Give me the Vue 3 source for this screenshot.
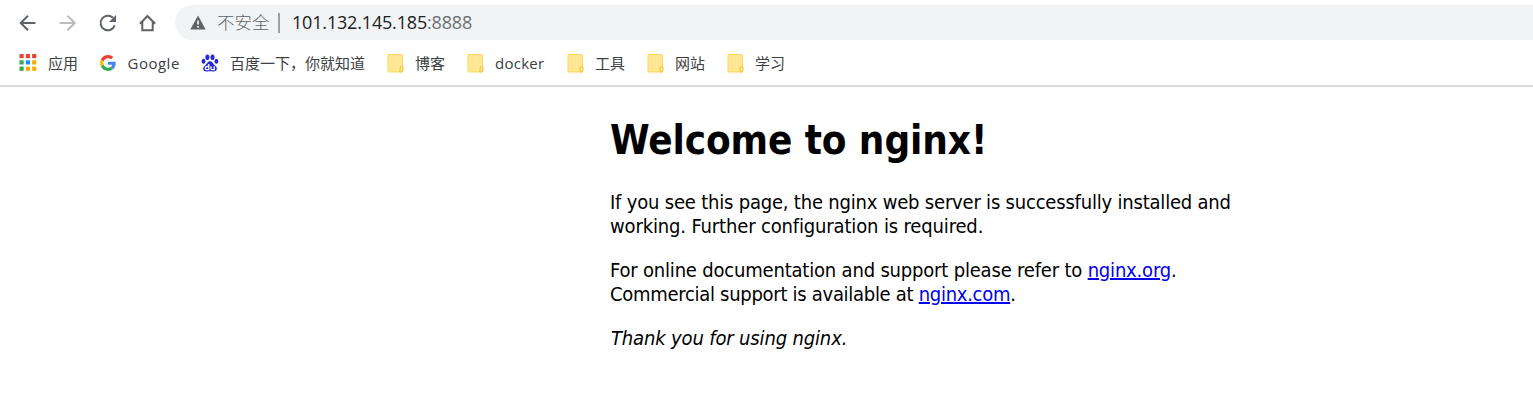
<script setup>
const folders = [
  { name: '博客', cls: 'f1' },
  { name: 'docker', cls: 'docker latin' },
  { name: '工具', cls: 'f3' },
  { name: '网站', cls: 'f4' },
  { name: '学习', cls: 'f5' },
]
const dots = ['#ea4335', '#ea4335', '#ea4335', '#34a853', '#1a8cff', '#fbab05', '#34a853', '#fbab05', '#fbab05']
</script>

<template>
  <div class="browser">
    <div class="toolbar">
      <div class="nav">
        <svg width="20" height="20" viewBox="0 0 20 20" class="ico"><path d="M17.500 10H3M10 2.700 2.700 10l7.300 7.300" /></svg>
        <svg width="20" height="20" viewBox="0 0 20 20" class="ico dim"><path d="M1.500 10h15M9.500 2.700 16.800 10 9.500 17.300" /></svg>
        <svg width="20" height="20" viewBox="0 0 20 20" class="ico"><path d="M16.800 12.300A7.300 7.300 0 1 1 15 4.800" /><path class="solid" d="M18 2v7h-7z" /></svg>
        <svg width="20" height="20" viewBox="0 0 20 20" class="ico"><path d="M1.900 10.800 9.500 3l7.600 7.800M4.300 9v8.200h10.400V9" /></svg>
      </div>
      <div class="omnibox">
        <svg width="16" height="15" viewBox="0 0 16 15"><path fill="#5f6368" d="M8 .5 15.700 14.500H.3z" /><path fill="#f1f3f4" d="M7.200 5.500h1.700v4H7.200zM7.200 11h1.700v1.700H7.200z" /></svg>
        <span class="unsafe">不安全</span>
        <span class="sep"></span>
        <span class="url">101.132.145.185<span class="port">:8888</span></span>
      </div>
    </div>
    <div class="bookmarks">
      <div class="bm apps">
        <svg width="17" height="17" viewBox="0 0 17 17"><rect v-for="(c, i) in dots" :key="i" :x="(i % 3) * 6.3" :y="Math.floor(i / 3) * 6.3" width="4.200" height="4.200" :fill="c" /></svg>
        <span>应用</span>
      </div>
      <div class="bm google latin">
        <svg width="16" height="16" viewBox="0 0 48 48">
          <path fill="#EA4335" d="M24 9.500c3.540 0 6.710 1.220 9.210 3.600l6.850-6.850C35.900 2.380 30.470 0 24 0 14.620 0 6.510 5.380 2.560 13.220l7.980 6.190C12.430 13.720 17.740 9.500 24 9.500z" />
          <path fill="#4285F4" d="M46.980 24.550c0-1.570-.15-3.090-.38-4.550H24v9.020h12.940c-.58 2.960-2.260 5.480-4.780 7.180l7.730 6c4.510-4.180 7.090-10.360 7.090-17.650z" />
          <path fill="#FBBC05" d="M10.530 28.590c-.48-1.450-.76-2.990-.76-4.590s.27-3.140.76-4.590l-7.980-6.190C.92 16.460 0 20.120 0 24c0 3.880.92 7.540 2.560 10.780l7.970-6.190z" />
          <path fill="#34A853" d="M24 48c6.480 0 11.930-2.130 15.890-5.810l-7.730-6c-2.150 1.450-4.920 2.300-8.160 2.300-6.260 0-11.570-4.220-13.470-9.910l-7.980 6.190C6.510 42.620 14.620 48 24 48z" />
        </svg>
        <span>Google</span>
      </div>
      <div class="bm baidu">
        <svg width="18" height="18" viewBox="0 0 18 18">
          <g fill="#2529dc">
            <ellipse cx="6.400" cy="3.300" rx="2" ry="2.800" /><ellipse cx="11.500" cy="3.300" rx="2" ry="2.800" />
            <ellipse cx="2.500" cy="7.300" rx="1.900" ry="2.500" /><ellipse cx="15.400" cy="7.300" rx="1.900" ry="2.500" />
            <path d="M9 7.300c2.300 0 2.700 2 4.200 3.400 1.700 1.500 3 2.700 2.600 4.600-.5 2.300-2.800 2.300-4.300 2.100-1.700-.3-3.300-.3-5 0-1.500.2-3.900.2-4.300-2.100-.4-1.900.9-3.100 2.600-4.600C6.300 9.300 6.700 7.300 9 7.300z" />
          </g>
          <path fill="none" stroke="#fff" stroke-width="1.300" d="M7.800 10v5.700H5.900a1.500 1.500 0 0 1 0-3.200h1.900M10 12.200v2.500q0 1 1 1h2.200v-3.500" />
        </svg>
        <span>百度一下，你就知道</span>
      </div>
      <div v-for="f in folders" :key="f.name" class="bm folder" :class="f.cls">
        <svg width="17" height="19" viewBox="0 0 17 19">
          <rect x=".5" y=".5" width="14.500" height="17.500" rx="1" fill="#ffe794" stroke="#fbd75b" />
          <path d="M12.500 18v-3.800q0-1.500 1.500-1.500h1.500V16q0 2-2 2z" fill="#ffe794" stroke="#efc23d" />
        </svg>
        <span>{{ f.name }}</span>
      </div>
    </div>
    <main>
      <h1>Welcome to nginx!</h1>
      <p><span class="l1">If you see this page, the nginx web server is successfully installed and</span><br /><span class="l2">working. Further configuration is required.</span></p>
      <p><span class="l3">For online documentation and support please refer to <a>nginx.org</a>.</span><br /><span class="l4">Commercial support is available at <a>nginx.com</a>.</span></p>
      <p><em class="l5">Thank you for using nginx.</em></p>
    </main>
  </div>
</template>

<style>
body { background: #fff; }
</style>

<style scoped>
.browser { width: 1533px; height: 402px; overflow: hidden; background: #fff; font-family: "Noto Sans", "Noto Sans CJK SC", sans-serif; }
.toolbar { height: 45px; display: flex; align-items: center; }
.nav { display: flex; gap: 20px; padding-left: 18px; width: 157px; box-sizing: content-box; }
.ico { flex: none; fill: none; stroke: #5f6368; stroke-width: 2; }
.ico .solid { fill: #5f6368; stroke: none; }
.dim { stroke: #babcbe; }
.omnibox { flex: 1; height: 35px; border-radius: 18px 0 0 18px; background: #f1f3f4; display: flex; align-items: center; padding-left: 15px; white-space: nowrap; }
.unsafe { margin-left: 11px; width: 53px; font: 17.5px/35px "Noto Sans CJK SC", sans-serif; font-weight: 300; color: #5f6368; padding-bottom: 2px; }
.sep { margin-left: 8px; width: 2px; height: 20px; background: #9aa0a6; }
.url { margin-left: 12px; font-family: "Open Sans", "Noto Sans", sans-serif; font-size: 18px; line-height: 35px; color: #202124; letter-spacing: -.18px; padding-bottom: 1px; }
.port { color: #6b6f73; }
.bookmarks { height: 40px; border-bottom: 2px solid #dadce0; display: flex; align-items: center; padding-left: 20px; box-sizing: content-box; }
.bm { display: flex; align-items: center; width: 80px; flex: none; font: 15px/22px "Noto Sans CJK SC", sans-serif; color: #3c4043; white-space: nowrap; }
.bm svg { flex: none; margin-top: -4px; width: 18px; }
.bm.apps svg { margin-left: -1px; margin-top: -6px; }
.bm span { margin-left: 11px; margin-top: -5px; }
.bm.latin { font-family: "Open Sans", sans-serif; letter-spacing: .5px; }
.bm.folder span { margin-left: 10px; }
.bm.docker { width: 100px; letter-spacing: .25px; }
.bm.google { width: 101px; }
.bm.google svg { width: 16px; }
.bm.google span { margin-left: 11.5px; }
.bm.baidu { width: 186px; }
.bm.baidu span { margin-left: 11px; }
main { width: 700px; margin-left: 610px; font: 20px/24px "DejaVu Sans Condensed", "DejaVu Sans", sans-serif; color: #000; white-space: nowrap; }
h1 { margin: 29px 0 25px; font: bold 40px/49px "DejaVu Sans Condensed", "DejaVu Sans", sans-serif; letter-spacing: -.1px; }
p { margin: 0 0 20px; }
a { color: #00e; text-decoration: underline; text-decoration-thickness: 2px; }
.l1 { letter-spacing: -.2px; }
.l2 { letter-spacing: -.15px; }
.l3 { letter-spacing: -.19px; }
.l4 { letter-spacing: -.29px; }
.l5 { letter-spacing: -.15px; padding-left: 1px; }
</style>
